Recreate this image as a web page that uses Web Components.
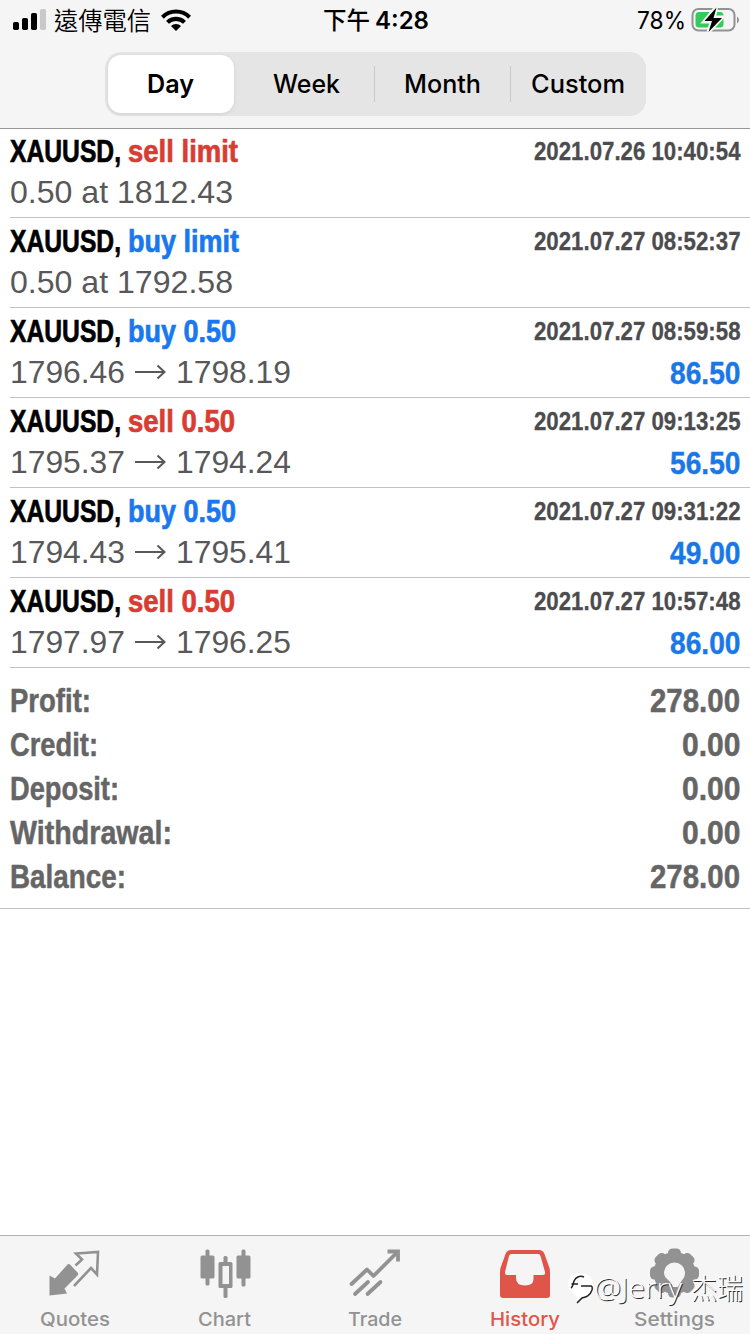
<!DOCTYPE html>
<html lang="zh-Hant">
<head>
<meta charset="utf-8">
<title>History</title>
<style>
  html, body { margin: 0; padding: 0; background: #fff; }
</style>
</head>
<body>
<history-app></history-app>
<script>
const define = (name, html, setup) => {
  const template = document.createElement('template');
  template.innerHTML = html;
  customElements.define(name, class extends HTMLElement {
    connectedCallback() {
      if (this.shadowRoot) return;
      this.attachShadow({ mode: 'open' }).append(template.content.cloneNode(true));
      if (setup) setup(this, this.shadowRoot);
    }
  });
};

// Text condensed or widened to a fixed width: <fit-text w="110">
define('fit-text', `
  <style>
    :host { display: inline-block; white-space: nowrap; }
    span { display: inline-block; transform-origin: 0 50%; white-space: pre; }
  </style><span></span>`, (el, root) => {
  const span = root.querySelector('span');
  span.textContent = el.getAttribute('text');
  const w = parseFloat(el.getAttribute('w'));
  const natural = span.getBoundingClientRect().width;
  el.style.width = w + 'px';
  if (natural) span.style.transform = 'scaleX(' + (w / natural) + ')';
});

define('status-bar', `
  <style>
    :host { display: grid; grid-template-columns: 1fr auto 1fr; height: 40px; align-items: center;
      font: 400 24px/40px Inter, "Noto Sans CJK TC", sans-serif; color: #000; padding: 0 10px 0 13px; box-sizing: border-box; }
    div { display: flex; align-items: center; height: 40px; }
    fit-text { padding-top: 2px; }
    .left fit-text { margin: 0 10px 0 8px; font-size: 24.5px; font-weight: 350; }
    .mid { font-weight: 450; gap: 5px; position: relative; left: -1px; }
    .right { justify-content: flex-end; gap: 5px; }
    svg { display: block; flex: none; }
  </style>
  <div class="left">
    <svg width="33" height="40"><g><rect x="0" y="22" width="6" height="8" rx="1.700"/><rect x="9" y="18" width="6" height="12" rx="1.700"/><rect x="18" y="13" width="6" height="17" rx="1.700"/><rect x="27" y="9" width="6" height="21" rx="1.700" fill="#c9c9ca"/></g></svg>
    <fit-text w="97" text="遠傳電信"></fit-text>
    <svg width="30" height="40" viewBox="0 0 30 40"><g fill="none" stroke="#000" stroke-width="4.100"><path d="M1.400 17.200a19.200 19.200 0 0 1 27.200 0"/><path d="M6.500 22.400a12 12 0 0 1 17 0"/></g><path d="M10 26a7 7 0 0 1 10 0L15 31Z"/></svg>
  </div>
  <div class="mid"><fit-text w="47" text="下午"></fit-text><fit-text w="54" text="4:28" style="font-weight:600"></fit-text></div>
  <div class="right">
    <fit-text w="49" text="78%"></fit-text>
    <svg width="49" height="40" viewBox="0 0 49 40"><rect x="1.500" y="9" width="42" height="21.500" rx="6" fill="none" stroke="#929294" stroke-width="2"/><rect x="4.500" y="12" width="28" height="15.500" rx="3.500" fill="#35cb5c"/><path d="M46 16.500q2 1 2 3.500t-2 3.500Z" fill="#929294"/><path d="M25 7.500 13.500 21.500h7.500L17.500 32 31 17.500h-8Z" stroke="#f5f5f5" stroke-width="4" fill="none"/><path d="M25.500 7.500 13.500 21h7.500L17.500 32 31 18h-8.500Z"/></svg>
  </div>`);

define('segment-item', `
  <style>
    :host { display: flex; flex: 1; align-items: center; justify-content: center; box-sizing: border-box; height: 58px;
      font: 450 25.500px/58px Inter, sans-serif; color: #000; position: relative; }
    :host([selected]) { background: #fff; border-radius: 13px; font-weight: 600; box-shadow: 0 1px 4px rgba(0,0,0,.09); flex: 0 0 126px; }
    i { display: none; width: 1px; height: 36px; background: #cacacc; position: absolute; left: 0; top: 11px; }
    :host([divided]) i { display: block; }
  </style><i></i><slot></slot>`);

define('segment-bar', `
  <style>
    :host { display: flex; width: 541px; height: 64px; margin: 12px auto 0; padding: 3px 0 3px 3px; box-sizing: border-box;
      background: #e5e5e6; border-radius: 16px; }
    .gap { flex: 0 0 5px; }
  </style>
  <segment-item selected><fit-text w="47" text="Day"></fit-text></segment-item><div class="gap"></div>
  <segment-item><fit-text w="67" text="Week"></fit-text></segment-item>
  <segment-item divided><fit-text w="77" text="Month"></fit-text></segment-item>
  <segment-item divided><fit-text w="94" text="Custom"></fit-text></segment-item>`);

define('deal-row', `
  <style>
    :host { display: flex; justify-content: space-between; height: 90px; margin-left: 10px; padding: 5px 10px 0 0;
      box-sizing: border-box; border-bottom: 1px solid #c2c2c4; font-family: "Liberation Sans", Arial, sans-serif; }
    .l, .r { display: flex; flex-direction: column; gap: 5px; }
    .r { align-items: flex-end; }
    .t { display: flex; gap: 7px; font-weight: 700; font-size: 32px; line-height: 36px; height: 36px; -webkit-text-stroke: .7px currentColor; }
    .p { display: flex; align-items: center; font-size: 31.500px; line-height: 36px; height: 36px; color: #58585a; }
    .d { font-weight: 700; font-size: 25.300px; line-height: 36px; height: 36px; color: #4c4c4e; -webkit-text-stroke: .3px currentColor; }
    .v { font-weight: 700; font-size: 32px; line-height: 38px; height: 38px; color: #1a78e6; -webkit-text-stroke: .4px currentColor; }
    .buy { color: #1a78ee; } .sell { color: #d93c32; }
    svg { margin: 0 10px 0 9px; }
  </style>
  <div class="l"><div class="t"></div><div class="p"></div></div>
  <div class="r"><div class="d"></div><div class="v"></div></div>`, (el, root) => {
  const a = n => el.getAttribute(n);
  const $ = s => root.querySelector(s);
  const widths = { 'sell limit': 110, 'buy limit': 111, 'buy 0.50': 108, 'sell 0.50': 107 };
  $('.t').innerHTML = `<fit-text w="111" text="XAUUSD,"></fit-text><fit-text class="${a('side')}" w="${widths[a('action')]}" text="${a('action')}"></fit-text>`;
  $('.p').innerHTML = a('to')
    ? `<fit-text w="115" text="${a('from')}"></fit-text><svg width="32" height="16" viewBox="0 0 32 16" fill="none" stroke="#58585a" stroke-width="2"><path d="M1 8H30M23.500 1.500 30.500 8l-7 6.500"/></svg><fit-text w="115" text="${a('to')}"></fit-text>`
    : `<fit-text w="223" text="${a('from')}"></fit-text>`;
  $('.d').innerHTML = `<fit-text w="206.500" text="${a('time')}"></fit-text>`;
  if (a('value')) $('.v').innerHTML = `<fit-text w="70.500" text="${a('value')}"></fit-text>`;
});

define('totals-panel', `
  <style>
    :host { display: block; padding: 10px 0 10px; height: 241px; box-sizing: border-box; border-bottom: 1px solid #c2c2c4; }
    div { display: flex; justify-content: space-between; height: 44px; padding: 0 10px; color: #656566;
      font: 700 34px/44px "Liberation Sans", Arial, sans-serif; -webkit-text-stroke: .5px currentColor; }
  </style>
  <div><fit-text w="81" text="Profit:"></fit-text><fit-text w="90" text="278.00"></fit-text></div>
  <div><fit-text w="88" text="Credit:"></fit-text><fit-text w="58.500" text="0.00"></fit-text></div>
  <div><fit-text w="109" text="Deposit:"></fit-text><fit-text w="58.500" text="0.00"></fit-text></div>
  <div><fit-text w="162" text="Withdrawal:"></fit-text><fit-text w="58.500" text="0.00"></fit-text></div>
  <div><fit-text w="116" text="Balance:"></fit-text><fit-text w="90" text="278.00"></fit-text></div>`);

define('tab-item', `
  <style>
    :host { display: flex; flex-direction: column; align-items: center; flex: 0 0 150px; color: #929292;
      font: 450 19.200px/26px Inter, sans-serif; }
    :host([active]) { color: #e0554a; }
    ::slotted(svg) { display: block; width: 60px; height: 60px; margin-top: 8px; }
    .label { height: 26px; margin-top: 2px; }
  </style>
  <slot></slot><div class="label"></div>`, (el, root) => {
  root.querySelector('.label').innerHTML = `<fit-text w="${el.getAttribute('w')}" text="${el.getAttribute('label')}"></fit-text>`;
});

// Icons share a 60x60 box centred on the tab
define('tab-bar', `
  <style>
    :host { display: flex; height: 99px; background: #f5f5f5; border-top: 1px solid #b4b4b6; box-sizing: border-box; }
    nav { display: flex; margin-left: -.5px; }
  </style>
  <nav>
  <tab-item label="Quotes" w="70"><svg viewBox="0 0 60 60"><path fill="currentColor" d="M4.500 31.500 10 34.500 22.500 20.500Q23.500 19.500 25 20.500L33 29Q33.500 30.500 32.500 31.500L19.500 44.500 22 49.500 4.500 51.500Z"/><path fill="none" stroke="currentColor" stroke-width="2.600" d="M30.500 21.500 37 15.500 31 9.500 53 8 52 30.500 46 24 29 42"/></svg></tab-item>
  <tab-item label="Chart" w="53"><svg viewBox="0 0 60 60"><g fill="currentColor"><rect x="5.500" y="11.500" width="14" height="23" rx="1.500"/><rect x="10.500" y="5.500" width="4" height="36" rx="1.500"/><rect x="41.500" y="11.500" width="14" height="23" rx="1.500"/><rect x="46.500" y="5.500" width="4" height="37" rx="1.500"/><path fill-rule="evenodd" d="M25 18H36Q37.500 18 37.500 19.500V42.500Q37.500 44 36 44H25Q23.500 44 23.500 42.500V19.500Q23.500 18 25 18ZM27.500 22V40H34V22Z"/><rect x="28.500" y="12" width="4" height="8" rx="1.500"/><rect x="28.500" y="43" width="4" height="11" rx="1.500"/></g></svg></tab-item>
  <tab-item label="Trade" w="54"><svg viewBox="0 0 60 60"><g fill="none" stroke="currentColor" stroke-width="3.800" stroke-linecap="round" stroke-linejoin="round"><path d="M6.500 40 22 25.500 28.500 32 52 8.500"/><path d="M42.500 7.500H53V17.500" stroke-linecap="butt" stroke-linejoin="miter"/><path d="M10 50 23 38M22.500 50 35.500 38"/></g></svg></tab-item>
  <tab-item label="History" w="70" active><svg viewBox="0 0 60 60"><path fill="currentColor" fill-rule="evenodd" d="M16 6H44Q48 6 49.500 10L54.500 24Q55 26 55 29V51Q55 54 52 54H8Q5 54 5 51V29Q5 26 5.500 24L10.500 10Q12 6 16 6ZM16.500 10Q14.500 10 14 12L10 28Q9.800 31 12 31H21V34Q21 41.500 30 41.500T38.500 34V31H48Q50.500 31 50 28L45.500 12Q45 10 43 10Z"/></svg></tab-item>
  <tab-item label="Settings" w="81"><svg viewBox="0 0 60 60"><g fill="currentColor"><circle cx="29.500" cy="29" r="21"/><g id="teeth"><rect x="23" y="4.500" width="13" height="49" rx="4.500"/><rect x="23" y="4.500" width="13" height="49" rx="4.500" transform="rotate(45 29.500 29)"/><rect x="23" y="4.500" width="13" height="49" rx="4.500" transform="rotate(90 29.500 29)"/><rect x="23" y="4.500" width="13" height="49" rx="4.500" transform="rotate(135 29.500 29)"/></g></g><path d="M29.500 18.500a10.500 10.500 0 0 1 10.500 10.500c0 6-5 8-7 14h-5c-1-6-9-8-9-14a10.500 10.500 0 0 1 10.500-10.500Z" fill="#f5f5f5"/></svg></tab-item>
  </nav>`);

define('water-mark', `
  <style>
    :host { position: absolute; left: 568px; top: 1269px; display: flex; align-items: center; height: 36px; color: #fff;
      font: 300 28px/36px "Open Sans", "Noto Sans CJK SC", sans-serif; text-shadow: 1px 1px .5px #2a2a2a; }
    svg { display: block; margin-right: 0; }
    .cn { margin-left: 9px; font-family: "Noto Sans CJK SC", sans-serif; }
  </style>
  <svg width="26" height="36" viewBox="0 0 26 36"><path fill="#fff" d="M13 4C5 4 0 9 0 15q0 7 7 10.500L9 31C20 30 25 23 25 16 25 9 20 4 13 4Z"/><g fill="none" stroke="#222" stroke-width="1.500"><path d="M3 19c2-1 2-4 3-7 2-4 6-6 10-4"/><path d="M3.500 15H10M13 17h9q3-.500 2 4c-2 6-6 7-10 8l-5 5"/></g></svg>
  <fit-text w="27" text="@"></fit-text><fit-text w="61" text="Jerry"></fit-text><fit-text class="cn" w="52" text="杰瑞"></fit-text>`);

define('history-app', `
  <style>
    :host { display: flex; flex-direction: column; width: 750px; height: 1334px; position: relative; background: #fff; overflow: hidden; }
    header { height: 128px; flex: none; background: #f5f5f5; box-shadow: 0 1px 0 #98989a; z-index: 1; }
    main { flex: 1; }
  </style>
  <header><status-bar></status-bar><segment-bar></segment-bar></header>
  <main>
    <deal-row side="sell" action="sell limit" from="0.50 at 1812.43" time="2021.07.26 10:40:54"></deal-row>
    <deal-row side="buy" action="buy limit" from="0.50 at 1792.58" time="2021.07.27 08:52:37"></deal-row>
    <deal-row side="buy" action="buy 0.50" from="1796.46" to="1798.19" time="2021.07.27 08:59:58" value="86.50"></deal-row>
    <deal-row side="sell" action="sell 0.50" from="1795.37" to="1794.24" time="2021.07.27 09:13:25" value="56.50"></deal-row>
    <deal-row side="buy" action="buy 0.50" from="1794.43" to="1795.41" time="2021.07.27 09:31:22" value="49.00"></deal-row>
    <deal-row side="sell" action="sell 0.50" from="1797.97" to="1796.25" time="2021.07.27 10:57:48" value="86.00"></deal-row>
    <totals-panel></totals-panel>
  </main>
  <tab-bar></tab-bar>
  <water-mark></water-mark>`);
</script>
</body>
</html>
